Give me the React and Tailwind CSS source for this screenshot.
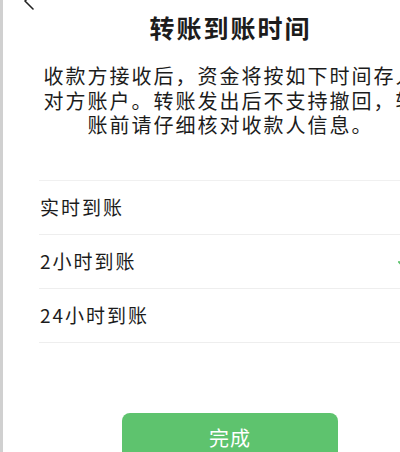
import React from 'react';

const rows = [
  { label: '实时到账', checked: false },
  { label: '2小时到账', checked: true },
  { label: '24小时到账', checked: false },
];

const App = () => {
  return (
    <div className="w-[400px] h-[452px] overflow-hidden bg-white" style={{ fontFamily: '"Noto Sans CJK SC", "Noto Sans", sans-serif' }}>
      <div className="relative w-[458px] h-full border-l-[3px] border-[#d0d0d0] text-[#1c1c1c]">
        {/* back arrow, cut off by the top edge */}
        <svg className="absolute left-[18px] top-[-9px]" width="16" height="20" viewBox="0 0 16 20" fill="none">
          <path d="M12 2 L4 10 L12 18" stroke="#222" strokeWidth="1.6" strokeLinecap="round" strokeLinejoin="round" />
        </svg>

        <h1 className="pt-[11px] h-[44px] text-center text-[25px] leading-[32px] font-bold tracking-[2px] whitespace-nowrap">
          转账到账时间
        </h1>

        <p className="mt-[20px] text-center text-[20px] leading-[24.5px] tracking-[2px] whitespace-nowrap">
          收款方接收后，资金将按如下时间存入
          <br />
          对方账户。转账发出后不支持撤回，转
          <br />
          账前请仔细核对收款人信息。
        </p>

        <div className="mt-[42px] ml-[36px] border-t border-[#f0f0f0]">
          {rows.map((r) => (
            <div key={r.label} className="relative h-[54px] flex items-center border-b border-[#eeeeee] text-[19px] tracking-[2px] pl-[1px]">
              <span>{r.label}</span>
              {r.checked && (
                <svg className="absolute left-[358px] top-[20px]" width="18" height="14" viewBox="0 0 18 14" fill="none">
                  <path d="M2 7 L7 12 L16 2" stroke="#5ec36e" strokeWidth="2" strokeLinecap="round" strokeLinejoin="round" />
                </svg>
              )}
            </div>
          ))}
        </div>

        <div className="mt-[70px] ml-[119px] w-[216px] h-[50px] rounded-[8px] bg-[#5ec36e] flex items-center justify-center text-white text-[20px] tracking-[1px]">
          完成
        </div>
      </div>
    </div>
  );
};

export default App;
